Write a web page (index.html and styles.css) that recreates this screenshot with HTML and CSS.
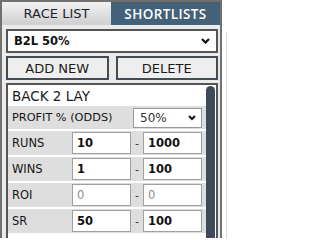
FILE: index.html
```html
<!DOCTYPE html>
<html>
<head>
<meta charset="utf-8">
<link rel="stylesheet" href="styles.css">
</head>
<body>
<div class="page">
  <div class="sidebar">
    <div class="tabs">
      <div class="tab tab-off">RACE LIST</div>
      <div class="tab tab-on">SHORTLISTS</div>
    </div>
    <div class="picker">
      <span class="picker-text">B2L 50%</span>
      <svg class="chev" width="9" height="6" viewBox="0 0 9 6"><polyline points="1,1 4.5,4.5 8,1" fill="none" stroke="#111" stroke-width="2.2"/></svg>
    </div>
    <div class="actions">
      <div class="btn">ADD NEW</div>
      <div class="btn">DELETE</div>
    </div>
    <div class="panel">
      <div class="panel-body">
        <div class="panel-title">BACK 2 LAY</div>
        <div class="row row-profit">
          <div class="label">PROFIT % (ODDS)</div>
          <div class="mini-select">
            <span>50%</span>
            <svg class="chev" width="8" height="6" viewBox="0 0 8 6"><polyline points="1,1 4,4 7,1" fill="none" stroke="#111" stroke-width="2"/></svg>
          </div>
        </div>
        <div class="row">
          <div class="label">RUNS</div>
          <div class="field">10</div>
          <div class="dash">-</div>
          <div class="field">1000</div>
        </div>
        <div class="row">
          <div class="label">WINS</div>
          <div class="field">1</div>
          <div class="dash">-</div>
          <div class="field">100</div>
        </div>
        <div class="row">
          <div class="label">ROI</div>
          <div class="field field-empty">0</div>
          <div class="dash">-</div>
          <div class="field field-empty">0</div>
        </div>
        <div class="row">
          <div class="label">SR</div>
          <div class="field">50</div>
          <div class="dash">-</div>
          <div class="field">100</div>
        </div>
      </div>
      <div class="scrollbar"></div>
    </div>
  </div>
  <div class="neighbor"></div>
</div>
</body>
</html>
```
FILE: styles.css
```css
html, body {
  margin: 0;
  padding: 0;
  background: #ffffff;
}
body {
  font-family: "DejaVu Sans", "Liberation Sans", sans-serif;
  color: #1a1a1a;
  width: 227px;
  height: 238px;
  overflow: hidden;
}
.page {
  display: flex;
  align-items: flex-start;
}
.sidebar {
  width: 218px;
  height: 250px;
  border: 2px solid #707070;
  border-bottom: none;
  background: #ebebeb;
  flex: none;
}
.tabs {
  display: flex;
  height: 23px;
}
.tab {
  display: flex;
  align-items: center;
  justify-content: center;
  font-size: 13px;
}
.tab-off {
  width: 109px;
  background: linear-gradient(#f2f2f2, #cfcfcf);
  color: #1d2230;
}
.tab-on {
  flex: 1;
  background: #436178;
  color: #ffffff;
  font-family: "Open Sans", "DejaVu Sans", sans-serif;
  font-weight: 600;
  font-size: 13.5px;
  letter-spacing: 0.4px;
}
.picker {
  margin: 4px 2px 0 4px;
  height: 20px;
  border: 2px solid #555555;
  background: #ffffff;
  display: flex;
  align-items: center;
  justify-content: space-between;
  padding: 0 6px 0 6px;
}
.picker-text {
  font-weight: 700;
  font-size: 11.5px;
  color: #111;
}
.actions {
  display: grid;
  grid-template-columns: 1fr 1fr;
  column-gap: 7px;
  margin: 3px 2px 0 4px;
}
.btn {
  height: 20px;
  border: 2px solid #444b55;
  background: #eeeeee;
  display: flex;
  align-items: center;
  justify-content: center;
  font-size: 13px;
  color: #1a1a1a;
}
.panel {
  margin: 3px 2px 0 4px;
  border: 2px solid #555555;
  border-bottom: none;
  height: 160px;
  background: #ffffff;
  display: flex;
}
.panel-body {
  flex: 1;
  display: flex;
  flex-direction: column;
}
.panel-title {
  height: 21px;
  padding-left: 4px;
  display: flex;
  align-items: center;
  font-size: 13.5px;
  color: #1a1a1a;
}
.row {
  display: flex;
  align-items: center;
  background: #dedede;
  height: 24px;
  margin-bottom: 2px;
  padding: 0 4px;
}
.row-profit {
  height: 23px;
}
.label {
  width: 60px;
  font-size: 11.5px;
  color: #151515;
}
.row-profit .label {
  width: 121px;
  font-size: 11.3px;
}
.mini-select {
  width: 69px;
  height: 20px;
  border: 1px solid #999999;
  background: #ffffff;
  display: flex;
  align-items: center;
  justify-content: space-between;
  padding: 0 5px 0 6px;
  box-sizing: border-box;
  font-size: 12px;
  color: #333;
}
.field {
  width: 59px;
  height: 22px;
  box-sizing: border-box;
  border: 1px solid #a0a0a0;
  background: #ffffff;
  display: flex;
  align-items: center;
  padding-left: 4px;
  font-size: 11.5px;
  font-weight: 700;
  color: #111;
}
.field-empty {
  font-weight: 400;
  color: #8c8c8c;
}
.dash {
  width: 12px;
  text-align: center;
  font-size: 11px;
  color: #333;
}
.scrollbar {
  width: 10px;
  margin-right: 1px;
  background: #3e4a57;
  border-radius: 5px 5px 0 0;
  margin-top: 1px;
}
.neighbor {
  width: 1px;
  height: 210px;
  margin-top: 32px;
  margin-left: 4px;
  background: #dddddd;
}
```
